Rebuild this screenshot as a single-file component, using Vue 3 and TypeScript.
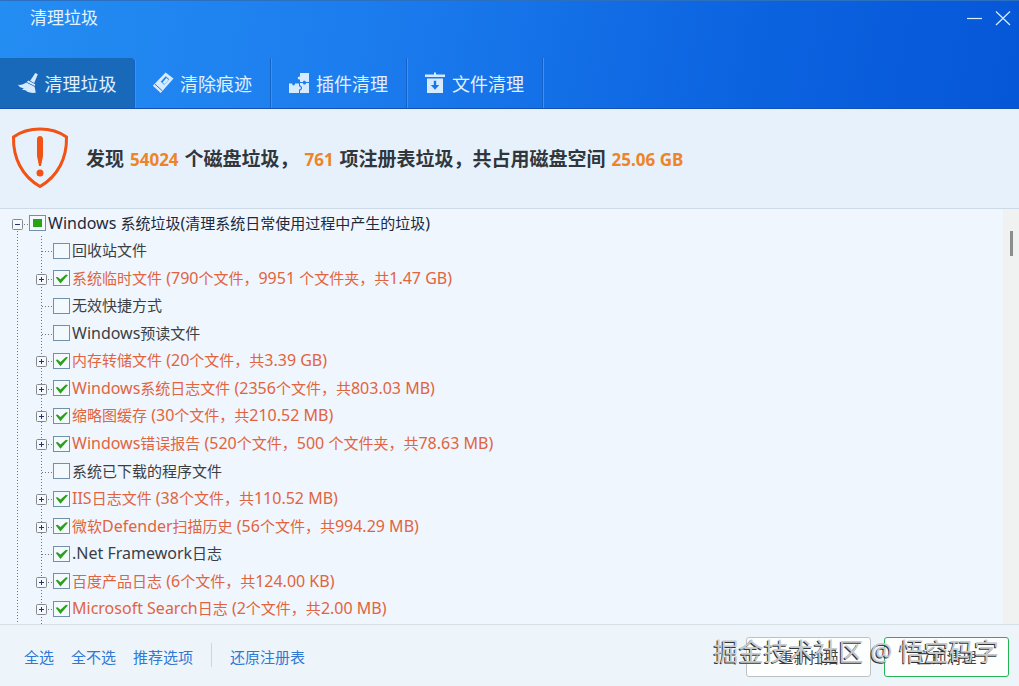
<script setup lang="ts">
import { ref } from 'vue'

interface TreeRow {
  label: string
  checked: boolean
  expandable: boolean
  found: boolean
}

interface TextRun {
  text: string
  latin: boolean
}

const tabs = [
  { id: 'junk', label: '清理垃圾' },
  { id: 'trace', label: '清除痕迹' },
  { id: 'plugin', label: '插件清理' },
  { id: 'file', label: '文件清理' },
]
const activeTab = ref('junk')

const row = (label: string, checked = false, expandable = false): TreeRow => ({
  label,
  checked,
  expandable,
  found: expandable,
})

const rootLabel = 'Windows 系统垃圾(清理系统日常使用过程中产生的垃圾)'

const rows = ref<TreeRow[]>([
  row('回收站文件'),
  row('系统临时文件 (790个文件，9951 个文件夹，共1.47 GB)', true, true),
  row('无效快捷方式'),
  row('Windows预读文件'),
  row('内存转储文件 (20个文件，共3.39 GB)', true, true),
  row('Windows系统日志文件 (2356个文件，共803.03 MB)', true, true),
  row('缩略图缓存 (30个文件，共210.52 MB)', true, true),
  row('Windows错误报告 (520个文件，500 个文件夹，共78.63 MB)', true, true),
  row('系统已下载的程序文件'),
  row('IIS日志文件 (38个文件，共110.52 MB)', true, true),
  row('微软Defender扫描历史 (56个文件，共994.29 MB)', true, true),
  row('.Net Framework日志', true),
  row('百度产品日志 (6个文件，共124.00 KB)', true, true),
  row('Microsoft Search日志 (2个文件，共2.00 MB)', true, true),
])

// Latin letters and digits are set one size larger than the Chinese text.
const runs = (label: string): TextRun[] =>
  (label.match(/[\x20-\x7e]+|[^\x20-\x7e]+/g) ?? []).map((text) => ({
    text,
    latin: /^[\x20-\x7e]/.test(text),
  }))

const setAll = (value: boolean) => rows.value.forEach((r) => (r.checked = value))
const setRecommended = () => rows.value.forEach((r) => (r.checked = r.found))
</script>

<template>
  <div class="window" lang="zh-CN">
    <header class="header">
      <div class="titlebar">
        <h1>清理垃圾</h1>
        <div class="window-buttons">
          <button type="button" aria-label="最小化">
            <svg width="16" height="16" viewBox="0 0 16 16"><path d="M0 8.500H15" /></svg>
          </button>
          <button type="button" aria-label="关闭">
            <svg width="16" height="16" viewBox="0 0 16 16"><path d="M1 1.500L15 15M15 1.500L1 15" /></svg>
          </button>
        </div>
      </div>
      <nav class="tabs">
        <button
          v-for="tab in tabs"
          :key="tab.id"
          type="button"
          class="tab"
          :class="{ active: activeTab === tab.id }"
          @click="activeTab = tab.id"
        >
          <svg v-if="tab.id === 'junk'" width="22" height="22" viewBox="0 0 22 22">
            <path d="M18.300 1L20.800 2.300L17.200 11L13.200 8.800Z" />
            <path d="M11.200 8.600L18.200 12.200L17.700 14L9.800 10Z" />
            <path d="M9.200 10.600L17.600 14.800L18.800 20.800C14 21.200 10.500 20.200 8.500 18.200L5 17.800L6.800 16.200C4 16 2 14.800 1 12.800C4 13.200 6.600 12.400 9.200 10.600Z" />
          </svg>
          <svg v-else-if="tab.id === 'trace'" width="22" height="22" viewBox="0 0 22 22">
            <path
              fill-rule="evenodd"
              d="M13.600 0.500L21.500 6.500L8.700 21L0.800 13.800ZM13.700 4.200L8.700 9.800L12.300 12.800L17.300 7.200Z"
            />
            <path d="M14.400 6L16.600 7.800L12.600 12.200L10.500 10.400Z" />
            <path class="cut" d="M2.800 12L10.300 18.800" />
          </svg>
          <svg v-else-if="tab.id === 'plugin'" width="22" height="22" viewBox="0 0 22 22">
            <path d="M12 1H21V10H17.800C18 8.200 14.800 8.200 15 10H12V7.500C9 7.800 9 4.200 12 4.500Z" />
            <path d="M1 11.500H4.200C4 14 7.200 14 7 11.500H11V14.600C13.500 14.200 13.500 17.800 11 17.500V21H1Z" />
            <path d="M12 11H15C14.800 13 18.200 13 18 11H21V21H12V18.600C14.800 18 14.800 14.200 12 13.600Z" />
          </svg>
          <svg v-else width="22" height="22" viewBox="0 0 22 22">
            <path d="M10 0.500H12V2.500H21V5H1V2.500H10Z" />
            <path
              fill-rule="evenodd"
              d="M3 6.500H19V21H3ZM9.800 8.800V13H6.800L11 17.800L15.200 13H12.200V8.800Z"
            />
          </svg>
          <span>{{ tab.label }}</span>
        </button>
      </nav>
    </header>

    <section class="summary">
      <svg class="shield" width="58" height="62" viewBox="0 0 58 62">
        <path
          class="outline"
          d="M29 2C39 2 48 4.500 55.500 10C56 31 47 49 29 59.500C11 49 2 31 2.500 10C10 4.500 19 2 29 2Z"
        />
        <path d="M29 9C31 9 32 10.500 32 12.500V29L30 39H28L26 29V12.500C26 10.500 27 9 29 9Z" />
        <circle cx="29" cy="46" r="3.500" />
      </svg>
      <p>
        发现 <em>54024</em> 个磁盘垃圾， <em>761</em> 项注册表垃圾，共占用磁盘空间 <em>25.06 GB</em>
      </p>
    </section>

    <main class="tree">
      <ul>
        <li class="row root">
          <button type="button" class="toggle" aria-label="收起">
            <svg width="11" height="11" viewBox="0 0 11 11"><rect x="0.500" y="0.500" width="10" height="10" rx="1" /><path d="M3 5.500H8" /></svg>
          </button>
          <i class="stub"></i>
          <label>
            <input type="checkbox" :indeterminate="true" />
            <span><span v-for="(run, i) in runs(rootLabel)" :key="i" :class="{ latin: run.latin }">{{ run.text }}</span></span>
          </label>
        </li>
        <li v-for="item in rows" :key="item.label" class="row" :class="{ found: item.found }">
          <button v-if="item.expandable" type="button" class="toggle" aria-label="展开">
            <svg width="11" height="11" viewBox="0 0 11 11"><rect x="0.500" y="0.500" width="10" height="10" rx="1" /><path d="M3 5.500H8M5.500 3V8" /></svg>
          </button>
          <i v-else class="toggle-space"></i>
          <i class="stub"></i>
          <label>
            <input v-model="item.checked" type="checkbox" />
            <span><span v-for="(run, i) in runs(item.label)" :key="i" :class="{ latin: run.latin }">{{ run.text }}</span></span>
          </label>
        </li>
      </ul>
      <div class="scrollbar"><div class="thumb"></div></div>
    </main>

    <footer class="footer">
      <nav class="links">
        <a href="#" @click.prevent="setAll(true)">全选</a>
        <a href="#" @click.prevent="setAll(false)">全不选</a>
        <a href="#" @click.prevent="setRecommended">推荐选项</a>
        <i class="divider"></i>
        <a href="#" @click.prevent>还原注册表</a>
      </nav>
      <div class="actions">
        <button type="button">重新扫描</button>
        <button type="button" class="primary">立即清理</button>
        <span class="watermark">掘金技术社区 @ 悟空码字</span>
      </div>
    </footer>
  </div>
</template>

<style>
body {
  margin: 0;
}
</style>

<style scoped>
.window {
  display: flex;
  flex-direction: column;
  min-height: 100vh;
  background: #f0f6fd;
  color: #3b3f44;
  font-family: 'Noto Sans', 'Noto Sans CJK SC', sans-serif;
  font-size: 15px;
}

button {
  margin: 0;
  padding: 0;
  border: 0;
  background: none;
  font: inherit;
  color: inherit;
}

.header {
  box-sizing: border-box;
  border-top: 1px solid #2a6fc0;
  border-bottom: 1px solid #1450b4;
  background: linear-gradient(100deg, #248df2 0%, #1c7dee 35%, #0b62df 75%, #0657d8 100%);
  color: #fff;
}

.titlebar {
  display: flex;
  justify-content: space-between;
  height: 57px;
  padding: 0 8px 0 30px;
}

h1 {
  margin: 0;
  font-size: 17px;
  line-height: 34px;
  font-weight: 400;
  color: #e4f3ff;
}

.window-buttons {
  display: flex;
  gap: 12px;
  height: 34px;
}

.window-buttons svg {
  display: block;
  fill: none;
  stroke: #d8efff;
  stroke-width: 1.2;
}

.tabs {
  display: flex;
  height: 50px;
}

.tab {
  display: flex;
  align-items: center;
  justify-content: center;
  gap: 6px;
  box-sizing: border-box;
  width: 136px;
  padding: 0 1px 1px 0;
  border-right: 1px solid #1562c6;
  box-shadow: 1px 0 #3b92f0;
  font-size: 18px;
  color: #e0f0ff;
}

.tab:first-child {
  width: 135px;
}

.tab.active {
  border-radius: 0 4px 0 0;
  background: #1969ba;
}

.tab svg {
  fill: #d6ebff;
}

.tab .cut {
  fill: none;
  stroke: #1c7dee;
  stroke-width: 1;
}

.summary {
  display: flex;
  align-items: center;
  gap: 17px;
  height: 97px;
  padding: 0 0 2px 11px;
  border-bottom: 1px solid #cbdae6;
  background: #e6f1fb;
}

.shield {
  fill: #f25213;
}

.shield .outline {
  fill: none;
  stroke: #f25213;
  stroke-width: 3;
}

.summary p {
  margin: 0;
  padding-top: 4px;
  font-size: 19px;
  line-height: 28px;
  font-weight: 700;
  color: #30363c;
}

.summary em {
  margin: 0 1px;
  font-size: 17px;
  font-style: normal;
  color: #ee8428;
}

.tree {
  display: flex;
  flex: 1;
}

ul {
  position: relative;
  display: flex;
  flex: 1;
  flex-direction: column;
  margin: 0;
  padding: 0 0 2px;
  list-style: none;
}

/* dotted guide of the root level */
ul::before {
  content: '';
  position: absolute;
  top: 22px;
  bottom: 0;
  left: 17px;
  width: 1px;
  background: repeating-linear-gradient(#6f767e 0 1px, transparent 1px 3px);
}

/* dotted guide of the child level */
ul::after {
  content: '';
  position: absolute;
  top: 27px;
  bottom: 0;
  left: 41px;
  width: 1px;
  background: repeating-linear-gradient(#6f767e 0 1px, transparent 1px 3px);
}

.row {
  display: flex;
  flex: 1 1 27px;
  align-items: center;
  padding-left: 36px;
  line-height: 20px;
  white-space: nowrap;
}

.row.root {
  padding-left: 12px;
  color: #1b2a3c;
}

.row.found {
  color: #e06440;
}

.latin {
  font-size: 16px;
  white-space: pre;
}

.toggle {
  z-index: 1;
  width: 11px;
  height: 11px;
  margin-top: 3px;
}

.toggle svg {
  display: block;
  fill: #f5f8fc;
  stroke: #84888e;
}

.toggle path {
  stroke: #25356e;
}

.toggle-space {
  width: 11px;
  height: 1px;
  margin-top: 3px;
  background: repeating-linear-gradient(90deg, #6f767e 0 1px, transparent 1px 3px) 6px 0 no-repeat;
}

.stub {
  width: 6px;
  height: 1px;
  margin-top: 3px;
  background: repeating-linear-gradient(90deg, transparent 0 1px, #6f767e 1px 2px, transparent 2px 3px);
}

label {
  display: flex;
  align-items: center;
  gap: 2px;
}

input {
  appearance: none;
  display: grid;
  place-items: center;
  box-sizing: border-box;
  width: 17px;
  height: 16px;
  margin: 1px 0 0;
  border: 1px solid #7390aa;
  background: #f4f9fe;
}

input:checked::before {
  content: '';
  width: 13px;
  height: 12px;
  background: #2ca01c;
  clip-path: polygon(5% 42%, 20% 38%, 42% 58%, 84% 18%, 100% 22%, 42% 94%);
}

input:indeterminate::before {
  content: '';
  width: 9px;
  height: 8px;
  background: #27a414;
}

.scrollbar {
  display: flex;
  justify-content: flex-end;
  width: 16px;
  padding: 22px 6px 0 0;
  box-sizing: border-box;
  background: #f0f1f1;
}

.thumb {
  width: 3px;
  height: 25px;
  background: #8c8c8c;
}

.footer {
  display: flex;
  align-items: center;
  justify-content: space-between;
  height: 61px;
  padding: 0 10px 0 24px;
  border-top: 1px solid #d6dfe6;
  background: #eef5fa;
}

.links {
  display: flex;
  align-items: center;
  gap: 17px;
  padding-top: 2px;
}

a {
  color: #2f78d4;
  text-decoration: none;
}

.divider {
  width: 1px;
  height: 24px;
  margin: 0 1px 4px;
  background: #c2d8ee;
}

.actions {
  position: relative;
  display: flex;
  gap: 13px;
  padding-top: 2px;
}

.actions button {
  box-sizing: border-box;
  width: 125px;
  height: 40px;
  border: 1px solid #bcc1c4;
  border-radius: 3px;
  background: #fdfefe;
  color: #444;
}

.actions .primary {
  border-color: #23b455;
}

.watermark {
  position: absolute;
  right: 10px;
  top: 0;
  font-size: 25px;
  line-height: 32px;
  white-space: nowrap;
  color: #c6cacd;
  text-shadow: -1px 1px #333;
  pointer-events: none;
}
</style>
